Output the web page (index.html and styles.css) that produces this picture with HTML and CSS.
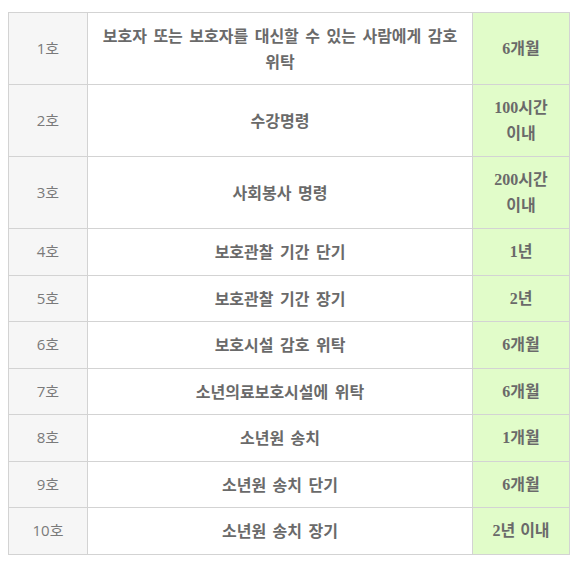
FILE: index.html
```html
<!DOCTYPE html>
<html lang="ko">
<head>
<meta charset="utf-8">
<link rel="stylesheet" href="styles.css">
</head>
<body>
<table class="disp">
  <colgroup>
    <col class="c-no">
    <col class="c-name">
    <col class="c-term">
  </colgroup>
  <tbody>
    <tr><td class="no">1호</td><td class="name">보호자 또는 보호자를 대신할 수 있는 사람에게 감호 위탁</td><td class="term">6개월</td></tr>
    <tr><td class="no">2호</td><td class="name">수강명령</td><td class="term">100시간 이내</td></tr>
    <tr><td class="no">3호</td><td class="name">사회봉사 명령</td><td class="term">200시간 이내</td></tr>
    <tr><td class="no">4호</td><td class="name">보호관찰 기간 단기</td><td class="term">1년</td></tr>
    <tr><td class="no">5호</td><td class="name">보호관찰 기간 장기</td><td class="term">2년</td></tr>
    <tr><td class="no">6호</td><td class="name">보호시설 감호 위탁</td><td class="term">6개월</td></tr>
    <tr><td class="no">7호</td><td class="name">소년의료보호시설에 위탁</td><td class="term">6개월</td></tr>
    <tr><td class="no">8호</td><td class="name">소년원 송치</td><td class="term">1개월</td></tr>
    <tr><td class="no">9호</td><td class="name">소년원 송치 단기</td><td class="term">6개월</td></tr>
    <tr><td class="no">10호</td><td class="name">소년원 송치 장기</td><td class="term">2년 이내</td></tr>
  </tbody>
</table>
</body>
</html>
```
FILE: styles.css
```css
html, body {
  margin: 0;
  padding: 0;
  background: #ffffff;
}
body {
  padding: 12px 8px 8px 8px;
}
.disp {
  border-collapse: collapse;
  width: 562px;
  table-layout: fixed;
  font-size: 15px;
  line-height: 25.5px;
  word-break: keep-all;
}
.c-no { width: 79px; }
.c-name { width: 385px; }
.c-term { width: 97px; }
.disp td {
  border: 1px solid #d3d3d3;
  padding: 10px 10px;
  text-align: center;
  vertical-align: middle;
}
.no {
  background: #f6f6f6;
  color: #7a7a7a;
  font-family: "Open Sans", "Noto Sans CJK KR", sans-serif;
  font-weight: 400;
}
.name {
  background: #ffffff;
  color: #6a6a6a;
  font-family: "Noto Sans CJK KR", sans-serif;
  font-size: 16px;
  font-weight: 700;
  word-spacing: 2px;
}
.term {
  background: #e1fcc9;
  color: #6a6a6a;
  font-family: "Liberation Serif", "Noto Sans CJK KR", serif;
  font-size: 16px;
  font-weight: 700;
  word-spacing: 1px;
}
```
